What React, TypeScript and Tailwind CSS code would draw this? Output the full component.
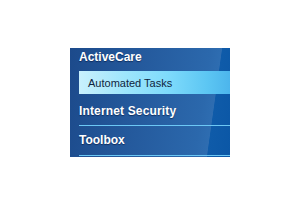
export default function App() {
  return (
    <div className="w-[300px] h-[206px] bg-white pt-[48px] pl-[70px] font-['Liberation_Sans',Arial,sans-serif]">
      <div className="w-[160px] h-[109px] flex flex-col bg-[linear-gradient(98deg,#1c4a8b_0%,#24599c_40%,#2b68ac_80%,#2e6db1_86.6%,#0f5ba9_87%,#0b57a6_100%)]">
        <div className="h-[23px] pl-[9px] pt-[2px] text-[12px] font-bold text-white leading-[14px] [text-shadow:0_1px_1px_rgba(0,20,60,0.6)]">
          ActiveCare
        </div>
        <div className="ml-[9px] h-[23px] pl-[9px] pt-[6px] text-[11px] leading-[13px] text-[#0f2540] bg-[linear-gradient(to_right,#c9f1fd_0%,#9fe6fc_30%,#7ddafb_60%,#5cc6f3_85%,#4cb5ec_100%)]">
          Automated Tasks
        </div>
        <div className="ml-[9px] h-[32px] pt-[10px] border-b border-[#6cc8f5] text-[12px] font-bold text-white leading-[14px] tracking-[0.15px] [text-shadow:0_1px_1px_rgba(0,20,60,0.6)]">
          Internet Security
        </div>
        <div className="ml-[9px] h-[30px] pt-[7px] border-b border-[#6cc8f5] text-[12px] font-bold text-white leading-[14px] [text-shadow:0_1px_1px_rgba(0,20,60,0.6)]">
          Toolbox
        </div>
      </div>
    </div>
  );
}
